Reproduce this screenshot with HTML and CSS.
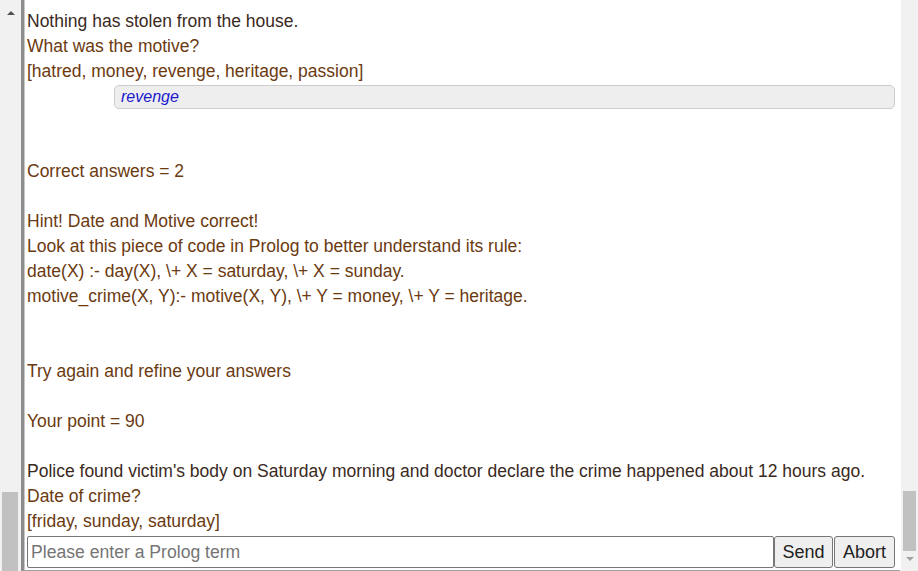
FILE: index.html
```html
<!DOCTYPE html>
<html>
<head>
<meta charset="utf-8">
<link rel="stylesheet" href="styles.css">
</head>
<body>
<div class="frame">
  <div class="sb sb-left">
    <div class="arrow-up"></div>
    <div class="sb-spacer"></div>
    <div class="thumb thumb-left"></div>
  </div>
  <div class="main">
    <div class="output">
      <div class="line dark">Nothing has stolen from the house.</div>
      <div class="line">What was the motive?</div>
      <div class="line">[hatred, money, revenge, heritage, passion]</div>
      <div class="answer-row"><div class="answer">revenge</div></div>
      <div class="line blank"></div>
      <div class="line blank"></div>
      <div class="line">Correct answers = 2</div>
      <div class="line blank"></div>
      <div class="line">Hint! Date and Motive correct!</div>
      <div class="line">Look at this piece of code in Prolog to better understand its rule:</div>
      <div class="line">date(X) :- day(X), \+ X = saturday, \+ X = sunday.</div>
      <div class="line">motive_crime(X, Y):- motive(X, Y), \+ Y = money, \+ Y = heritage.</div>
      <div class="line blank"></div>
      <div class="line blank"></div>
      <div class="line">Try again and refine your answers</div>
      <div class="line blank"></div>
      <div class="line">Your point = 90</div>
      <div class="line blank"></div>
      <div class="line dark">Police found victim's body on Saturday morning and doctor declare the crime happened about 12 hours ago.</div>
      <div class="line">Date of crime?</div>
      <div class="line">[friday, sunday, saturday]</div>
    </div>
    <div class="input-row">
      <input class="term" type="text" placeholder="Please enter a Prolog term">
      <button class="btn">Send</button>
      <button class="btn">Abort</button>
    </div>
  </div>
  <div class="sb sb-right">
    <div class="sb-spacer"></div>
    <div class="thumb thumb-right"></div>
    <div class="arrow-down"></div>
  </div>
</div>
</body>
</html>
```
FILE: styles.css
```css
html, body {
  margin: 0;
  padding: 0;
  background: #ffffff;
}
body {
  font-family: "Liberation Sans", Arial, sans-serif;
}
.frame {
  display: flex;
  width: 918px;
  height: 571px;
  overflow: hidden;
}
.sb {
  display: flex;
  flex-direction: column;
  align-items: center;
  background: #f1f1f1;
  flex: none;
}
.sb-left {
  width: 21px;
}
.sb-right {
  width: 17px;
  margin-left: 1px;
}
.sb-spacer {
  flex: 1;
}
.arrow-up {
  margin-top: 11px;
  width: 0;
  height: 0;
  border-left: 4px solid transparent;
  border-right: 4px solid transparent;
  border-bottom: 4px solid #505050;
}
.arrow-down {
  margin: 6px 0 10px;
  width: 0;
  height: 0;
  border-left: 4px solid transparent;
  border-right: 4px solid transparent;
  border-top: 4px solid #a3a3a3;
}
.thumb {
  background: #c1c1c1;
}
.thumb-left {
  width: 16px;
  height: 79px;
  margin-right: 2px;
}
.thumb-right {
  width: 13px;
  height: 60px;
}
.main {
  flex: 1;
  display: flex;
  flex-direction: column;
  border-left: 3px solid #8c8c8c;
  box-shadow: inset 1px 0 0 #c8c8c8;
  border-bottom: 1px solid #a0a0a0;
  min-width: 0;
}
.output {
  flex: 1;
  padding: 9px 0 0 3px;
  overflow: hidden;
  color: #6b3a10;
  font-size: 17.5px;
  line-height: 25px;
}
.line {
  white-space: nowrap;
  height: 25px;
}
.dark {
  color: #3a2a1e;
}
.answer-row {
  display: flex;
  height: 25px;
  align-items: center;
  padding-left: 87px;
  padding-right: 5px;
}
.answer {
  flex: 1;
  height: 22px;
  line-height: 22px;
  background: #eeeeee;
  border: 1px solid #cccccc;
  border-radius: 5px;
  padding-left: 6px;
  font-style: italic;
  font-size: 16px;
  color: #1a1acc;
}
.input-row {
  display: flex;
  height: 32px;
  margin: 2px 5px 2px 3px;
}
.term {
  flex: 1;
  margin: 0;
  height: 32px;
  box-sizing: border-box;
  border: 1px solid #767676;
  border-radius: 2px;
  padding: 0 3px;
  font-family: "Liberation Sans", Arial, sans-serif;
  font-size: 17.6px;
  color: #333;
}
.term::placeholder {
  color: #757575;
}
.btn {
  margin: 0;
  height: 32px;
  width: 59px;
  box-sizing: border-box;
  background: #efefef;
  border: 1px solid #767676;
  border-radius: 3px;
  padding: 0;
  font-family: "Liberation Sans", Arial, sans-serif;
  font-size: 18px;
  color: #222;
}
.btn + .btn {
  margin-left: 1px;
  width: 61px;
}
```
